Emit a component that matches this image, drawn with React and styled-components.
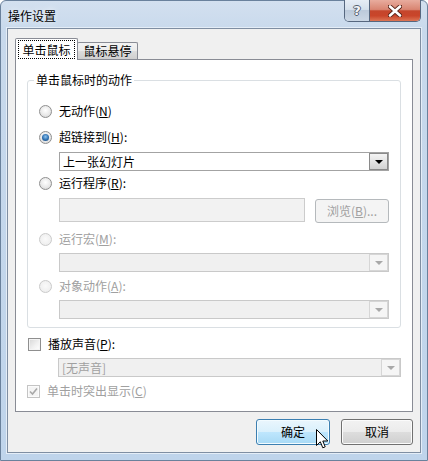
import React from "react";
import styled, { createGlobalStyle } from "styled-components";

const GlobalStyle = createGlobalStyle`
  html, body {
    margin: 0;
    padding: 0;
    background: #ffffff;
  }
  body {
    font-family: "Noto Sans CJK SC", "Noto Sans", sans-serif;
    font-size: 12px;
    line-height: 16px;
    color: #000;
  }
`;

const Window = styled.div`
  position: relative;
  width: 428px;
  height: 461px;
  box-sizing: border-box;
  display: flex;
  flex-direction: column;
  padding: 0 6px 7px 6px;
  background: linear-gradient(180deg, #d3e0ef 0px, #c8d9ec 30px, #bfd4eb 100%);
  border: 1px solid #6a819c;
  border-radius: 6px 6px 0 0;
`;

const TitleBar = styled.div`
  height: 27px;
  display: flex;
  align-items: flex-start;
  padding-left: 1px;
`;

const Caption = styled.div`
  margin-top: 7px;
  font-size: 12px;
  line-height: 16px;
  text-shadow: 0 0 6px rgba(255, 255, 255, 0.9);
`;

const Spacer = styled.div`
  flex: 1;
`;

const CaptionButtons = styled.div`
  display: flex;
  height: 21px;
  margin-top: -1px;
  border: 1px solid #56677f;
  border-top: none;
  border-radius: 0 0 5px 5px;
  overflow: hidden;
`;

const HelpButton = styled.div`
  width: 24px;
  display: flex;
  align-items: center;
  justify-content: center;
  background: linear-gradient(180deg, #e6edf5 0%, #d5e0ec 45%, #bccadb 50%, #cbd7e5 100%);
  border-right: 1px solid #56677f;
  font-family: "DejaVu Sans", sans-serif;
  font-weight: bold;
  font-size: 13px;
  color: #f4f6f9;
  text-shadow: 1px 0 0 #55606f, -1px 0 0 #55606f, 0 1px 0 #55606f, 0 -1px 0 #55606f;
`;

const CloseButton = styled.div`
  width: 50px;
  display: flex;
  align-items: center;
  justify-content: center;
  background: linear-gradient(180deg, #e8ac9e 0%, #d98572 45%, #c5462c 52%, #c9452a 75%, #dc7555 100%);
`;

const Client = styled.div`
  flex: 1;
  display: flex;
  flex-direction: column;
  background: #f0f0f0;
  border: 1px solid #7f8ea2;
  box-shadow: 0 0 0 1px #e4edf7;
  padding: 9px 7px 7px 7px;
`;

const TabRow = styled.div`
  display: flex;
  align-items: flex-end;
  height: 21px;
`;

const Tab = styled.div`
  position: relative;
  box-sizing: border-box;
  display: flex;
  align-items: center;
  justify-content: center;
  border: 1px solid #898c95;
  border-bottom: none;
  border-radius: 2px 2px 0 0;
  width: ${(p) => (p.$active ? "63px" : "61px")};
  height: ${(p) => (p.$active ? "22px" : "17px")};
  margin-bottom: ${(p) => (p.$active ? "-1px" : "0")};
  margin-left: ${(p) => (p.$active ? "0" : "-1px")};
  z-index: ${(p) => (p.$active ? 2 : 1)};
  background: ${(p) =>
    p.$active ? "#ffffff" : "linear-gradient(180deg, #f3f3f3 0%, #ebebeb 50%, #dddddd 51%, #cfcfcf 100%)"};
`;

const FocusText = styled.span`
  border: 1px dotted #000;
  padding: 0 3px;
  line-height: 17px;
`;

const Panel = styled.div`
  flex: 1;
  display: flex;
  flex-direction: column;
  background: #ffffff;
  border: 1px solid #898c95;
  padding: 12px 11px 0 11px;
`;

const Group = styled.fieldset`
  margin: 0;
  padding: 0 11px 8px 11px;
  border: 1px solid #dadfe3;
  border-radius: 3px;
  display: flex;
  flex-direction: column;
`;

const Legend = styled.legend`
  padding: 0 2px;
  margin-left: -5px;
  line-height: 16px;
`;

const OptionRow = styled.div`
  display: flex;
  align-items: center;
  height: 16px;
  gap: 7px;
  margin-top: ${(p) => p.$top || 0}px;
  padding-left: ${(p) => p.$indent || 0}px;
  color: ${(p) => (p.$disabled ? "#a0a0a0" : "#000")};
`;

const Radio = styled.span`
  position: relative;
  box-sizing: border-box;
  width: 13px;
  height: 13px;
  border-radius: 50%;
  border: 1px solid ${(p) => (p.$disabled ? "#cacaca" : "#8f8f8f")};
  background: ${(p) =>
    p.$disabled
      ? "radial-gradient(circle at 50% 45%, #fafafa 0%, #efefef 70%)"
      : "radial-gradient(circle at 50% 40%, #ffffff 0%, #e9e9e9 55%, #cfcfcf 100%)"};
  &::after {
    content: "";
    display: ${(p) => (p.$checked ? "block" : "none")};
    position: absolute;
    left: 2px;
    top: 2px;
    width: 7px;
    height: 7px;
    border-radius: 50%;
    background: radial-gradient(circle at 50% 40%, #8fc4ef 0%, #2d6fb0 55%, #173f6b 100%);
  }
`;

const Check = styled.span`
  box-sizing: border-box;
  width: 13px;
  height: 13px;
  display: flex;
  align-items: center;
  justify-content: center;
  border: 1px solid ${(p) => (p.$disabled ? "#c4c4c4" : "#8f8f8f")};
  background: ${(p) =>
    p.$disabled ? "#f4f4f4" : "linear-gradient(135deg, #d6d6d6 0%, #f2f2f2 60%, #ffffff 100%)"};
  box-shadow: inset 0 0 0 1px ${(p) => (p.$disabled ? "#fbfbfb" : "#f4f4f4")};
`;

const Combo = styled.div`
  box-sizing: border-box;
  display: flex;
  align-items: stretch;
  height: 19px;
  margin-top: ${(p) => p.$top || 0}px;
  margin-left: ${(p) => p.$indent || 0}px;
  border: 1px solid ${(p) => (p.$disabled ? "#c9c9c9" : "#a3a3a3")};
  background: ${(p) => (p.$disabled ? "#f0f0f0" : "#ffffff")};
  color: ${(p) => (p.$disabled ? "#a0a0a0" : "#000")};
`;

const ComboText = styled.div`
  flex: 1;
  padding-left: 3px;
  line-height: 17px;
`;

const ComboButton = styled.div`
  width: 17px;
  display: flex;
  align-items: center;
  justify-content: center;
  border: 1px solid ${(p) => (p.$disabled ? "#d6d6d6" : "#8a8a8a")};
  margin: 0;
  background: ${(p) =>
    p.$disabled ? "#f5f5f5" : "linear-gradient(180deg, #f4f4f4 0%, #e4e4e4 50%, #d2d2d2 100%)"};
`;

const Arrow = styled.span`
  width: 0;
  height: 0;
  border-left: 4px solid transparent;
  border-right: 4px solid transparent;
  border-top: 4px solid ${(p) => (p.$disabled ? "#a8a8a8" : "#000")};
  margin-top: 1px;
`;

const FieldRow = styled.div`
  display: flex;
  align-items: center;
  gap: 10px;
  height: 25px;
  margin-top: ${(p) => p.$top || 0}px;
  margin-left: 20px;
`;

const TextBox = styled.div`
  flex: 1;
  box-sizing: border-box;
  height: 24px;
  align-self: flex-start;
  border: 1px solid #cccccc;
  background: #f2f2f2;
`;

const SmallButton = styled.div`
  box-sizing: border-box;
  width: 74px;
  height: 24px;
  align-self: flex-end;
  display: flex;
  align-items: center;
  justify-content: center;
  border: 1px solid #b5b9bc;
  border-radius: 3px;
  background: #f4f4f4;
  color: #a0a0a0;
`;

const Footer = styled.div`
  display: flex;
  justify-content: flex-end;
  gap: 11px;
  margin-top: 7px;
`;

const DialogButton = styled.div`
  box-sizing: border-box;
  width: ${(p) => (p.$primary ? "74px" : "72px")};
  height: 26px;
  display: flex;
  align-items: center;
  justify-content: center;
  border-radius: 3px;
  border: 1px solid ${(p) => (p.$primary ? "#3c7fb1" : "#707070")};
  box-shadow: inset 0 0 0 1px ${(p) => (p.$primary ? "#f2fbff" : "#fbfbfb")};
  background: ${(p) =>
    p.$primary
      ? "linear-gradient(180deg, #eaf6fd 0%, #d9f0fc 50%, #bee6fd 51%, #a7d9f5 100%)"
      : "linear-gradient(180deg, #f2f2f2 0%, #ebebeb 50%, #dddddd 51%, #cfcfcf 100%)"};
`;

const Pointer = styled.svg`
  position: absolute;
  left: 315px;
  top: 428px;
  z-index: 5;
`;

const Key = ({ k }) => (
  <>
    (<u>{k}</u>)
  </>
);

const DropDown = ({ text, disabled, top, indent }) => (
  <Combo $disabled={disabled} $top={top} $indent={indent}>
    <ComboText>{text}</ComboText>
    <ComboButton $disabled={disabled}>
      <Arrow $disabled={disabled} />
    </ComboButton>
  </Combo>
);

export default function App() {
  return (
    <>
      <GlobalStyle />
      <Window>
        <TitleBar>
          <Caption>操作设置</Caption>
          <Spacer />
          <CaptionButtons>
            <HelpButton>?</HelpButton>
            <CloseButton>
              <svg width="14" height="12" viewBox="0 0 14 12">
                <path d="M2 1.5 L12 10.5 M12 1.5 L2 10.5" stroke="#5a2418" strokeWidth="4.4" strokeLinecap="round" fill="none" />
                <path d="M2 1.5 L12 10.5 M12 1.5 L2 10.5" stroke="#ffffff" strokeWidth="2.6" strokeLinecap="round" fill="none" />
              </svg>
            </CloseButton>
          </CaptionButtons>
        </TitleBar>
        <Client>
          <TabRow>
            <Tab $active>
              <FocusText>单击鼠标</FocusText>
            </Tab>
            <Tab>鼠标悬停</Tab>
          </TabRow>
          <Panel>
            <Group>
              <Legend>单击鼠标时的动作</Legend>
              <OptionRow $top={15}>
                <Radio />
                <span>无动作<Key k="N" /></span>
              </OptionRow>
              <OptionRow $top={10}>
                <Radio $checked />
                <span>超链接到<Key k="H" />:</span>
              </OptionRow>
              <DropDown text="上一张幻灯片" top={7} indent={20} />
              <OptionRow $top={4}>
                <Radio />
                <span>运行程序<Key k="R" />:</span>
              </OptionRow>
              <FieldRow $top={7}>
                <TextBox />
                <SmallButton>浏览(<u>B</u>)...</SmallButton>
              </FieldRow>
              <OptionRow $top={8} $disabled>
                <Radio $disabled />
                <span>运行宏<Key k="M" />:</span>
              </OptionRow>
              <DropDown text="" disabled top={6} indent={20} />
              <OptionRow $top={6} $disabled>
                <Radio $disabled />
                <span>对象动作<Key k="A" />:</span>
              </OptionRow>
              <DropDown text="" disabled top={6} indent={20} />
            </Group>
            <OptionRow $top={8} $indent={1}>
              <Check />
              <span>播放声音<Key k="P" />:</span>
            </OptionRow>
            <DropDown text="[无声音]" disabled top={6} indent={31} />
            <OptionRow $top={6} $disabled>
              <Check $disabled>
                <svg width="9" height="9" viewBox="0 0 9 9">
                  <path d="M1 4.5 L3.5 7 L8 1.5" stroke="#a8a8a8" strokeWidth="1.6" fill="none" />
                </svg>
              </Check>
              <span>单击时突出显示<Key k="C" /></span>
            </OptionRow>
          </Panel>
          <Footer>
            <DialogButton $primary>确定</DialogButton>
            <DialogButton>取消</DialogButton>
          </Footer>
        </Client>
        <Pointer width="13" height="20" viewBox="0 0 13 20">
          <path d="M0.5 0.5 L0.5 16.5 L4.3 12.8 L6.8 18.8 L9.2 17.8 L6.8 12 L11.8 12 Z" fill="#ffffff" stroke="#000000" strokeWidth="1" strokeLinejoin="miter" />
        </Pointer>
      </Window>
    </>
  );
}
